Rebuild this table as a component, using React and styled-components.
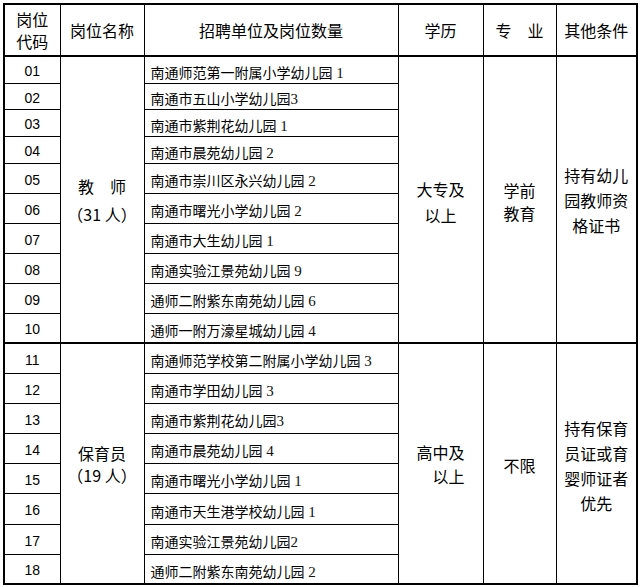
import React from "react";
import styled, { createGlobalStyle } from "styled-components";

const Global = createGlobalStyle`
  html, body { margin: 0; padding: 0; background: #fff; }
  body {
    font-family: "Noto Sans CJK SC", "Liberation Sans", sans-serif;
    color: #000;
  }
`;

const Page = styled.div`
  padding: 3px 0 0 3px;
  width: 642px;
  height: 587px;
  box-sizing: border-box;
  overflow: hidden;
`;

const Table = styled.table`
  border-collapse: collapse;
  table-layout: fixed;
  width: 635px;
  border: 2px solid #000;
`;

const Row = styled.tr`
  height: ${(p) => p.$h}px;
  ${(p) => (p.$thickTop ? "& > td { border-top: 2px solid #000; }" : "")}
`;

const HeadRow = styled.tr`
  height: 52px;
`;

const HeadCell = styled.th`
  border: 1px solid #000;
  border-bottom: 2px solid #000;
  font-weight: 400;
  font-size: 16px;
  line-height: 22px;
  text-align: center;
  vertical-align: middle;
  padding: 0;
  white-space: pre;
`;

const CodeCell = styled.td`
  border: 1px solid #000;
  font-family: "Liberation Sans", "DejaVu Sans", sans-serif;
  font-size: 14px;
  line-height: 18px;
  text-align: center;
  vertical-align: middle;
  padding: 3px 0 0 0;
`;

const UnitCell = styled.td`
  border: 1px solid #000;
  font-size: 14px;
  line-height: 18px;
  text-align: left;
  vertical-align: middle;
  padding: 5px 0 0 6px;
  white-space: nowrap;
`;

const Count = styled.span`
  font-family: "Liberation Serif", "DejaVu Serif", serif;
  font-size: 15px;
  color: ${(p) => p.$c || "#111"};
`;

const SpanCell = styled.td`
  border: 1px solid #000;
  font-size: 16px;
  line-height: ${(p) => p.$lh || 24}px;
  text-align: center;
  vertical-align: middle;
  padding: ${(p) => p.$pt || 0}px 0 0 0;
`;

const Line = styled.span`
  display: block;
  white-space: pre;
`;

const teachers = [
  ["01", "南通师范第一附属小学幼儿园", " 1", 27],
  ["02", "南通市五山小学幼儿园", "3", 26],
  ["03", "南通市紫荆花幼儿园", " 1", 27],
  ["04", "南通市晨苑幼儿园", " 2", 27],
  ["05", "南通市崇川区永兴幼儿园", " 2", 30],
  ["06", "南通市曙光小学幼儿园", " 2", 30],
  ["07", "南通市大生幼儿园", " 1", 30],
  ["08", "南通实验江景苑幼儿园", " 9", 30],
  ["09", "通师二附紫东南苑幼儿园", " 6", 30],
  ["10", "通师一附万濠星城幼儿园", " 4", 30],
];

const nurses = [
  ["11", "南通师范学校第二附属小学幼儿园", " 3", 30],
  ["12", "南通市学田幼儿园", " 3", 30],
  ["13", "南通市紫荆花幼儿园", "3", 30],
  ["14", "南通市晨苑幼儿园", " 4", 30],
  ["15", "南通市曙光小学幼儿园", " 1", 30],
  ["16", "南通市天生港学校幼儿园", " 1", 31],
  ["17", "南通实验江景苑幼儿园", "2", 30],
  ["18", "通师二附紫东南苑幼儿园", " 2", 30],
];

function Lines({ items }) {
  return items.map((t, i) => <Line key={i}>{t}</Line>);
}

export default function App() {
  return (
    <Page>
      <Global />
      <Table>
        <colgroup>
          <col style={{ width: 56 }} />
          <col style={{ width: 84 }} />
          <col style={{ width: 254 }} />
          <col style={{ width: 85 }} />
          <col style={{ width: 73 }} />
          <col style={{ width: 81 }} />
        </colgroup>
        <thead>
          <HeadRow>
            <HeadCell>{"岗位\n代码"}</HeadCell>
            <HeadCell>岗位名称</HeadCell>
            <HeadCell>招聘单位及岗位数量</HeadCell>
            <HeadCell>学历</HeadCell>
            <HeadCell>专　业</HeadCell>
            <HeadCell>其他条件</HeadCell>
          </HeadRow>
        </thead>
        <tbody>
          {teachers.map(([code, name, n, h], i) => (
            <Row key={code} $h={h}>
              <CodeCell>{code}</CodeCell>
              {i === 0 && (
                <SpanCell rowSpan={10} $lh={28}>
                  <Lines items={["教　师", "（31 人）"]} />
                </SpanCell>
              )}
              <UnitCell>
                {name}
                <Count>{n}</Count>
              </UnitCell>
              {i === 0 && (
                <>
                  <SpanCell rowSpan={10} $lh={26} $pt={4}>
                    <Lines items={["大专及", "以上"]} />
                  </SpanCell>
                  <SpanCell rowSpan={10} $lh={23} $pt={5}>
                    <Lines items={["学前", "教育"]} />
                  </SpanCell>
                  <SpanCell rowSpan={10} $lh={25} $pt={2}>
                    <Lines items={["持有幼儿", "园教师资", "格证书"]} />
                  </SpanCell>
                </>
              )}
            </Row>
          ))}
          {nurses.map(([code, name, n, h], i) => (
            <Row key={code} $h={h} $thickTop={i === 0}>
              <CodeCell>{code}</CodeCell>
              {i === 0 && (
                <SpanCell rowSpan={8} $lh={22}>
                  <Lines items={["保育员", "（19 人）"]} />
                </SpanCell>
              )}
              <UnitCell>
                {name}
                <Count>{n}</Count>
              </UnitCell>
              {i === 0 && (
                <>
                  <SpanCell rowSpan={8} $lh={24}>
                    <Lines items={["高中及", "　以上"]} />
                  </SpanCell>
                  <SpanCell rowSpan={8} $lh={24} $pt={3}>
                    <Lines items={["不限"]} />
                  </SpanCell>
                  <SpanCell rowSpan={8} $lh={25} $pt={4}>
                    <Lines items={["持有保育", "员证或育", "婴师证者", "优先"]} />
                  </SpanCell>
                </>
              )}
            </Row>
          ))}
        </tbody>
      </Table>
    </Page>
  );
}
